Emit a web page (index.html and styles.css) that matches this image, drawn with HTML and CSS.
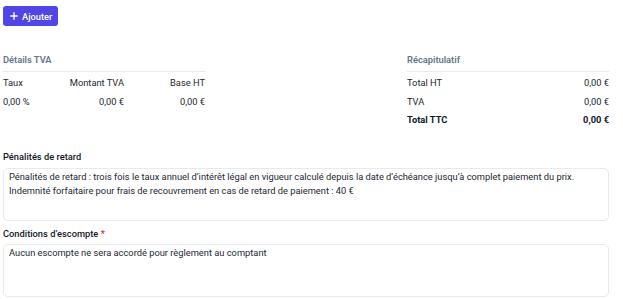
FILE: index.html
```html
<!DOCTYPE html>
<html lang="fr">
<head>
<meta charset="utf-8">
<link rel="stylesheet" href="styles.css">
</head>
<body>
<div class="page">
  <div class="toolbar">
    <button class="btn-add" type="button">
      <svg width="8" height="8" viewBox="0 0 10 10"><path d="M5 1v8M1 5h8" stroke="#fff" stroke-width="1.7" stroke-linecap="round"/></svg>
      <span>Ajouter</span>
    </button>
  </div>

  <div class="summary">
    <section class="block">
      <h3 class="block-title">Détails TVA</h3>
      <div class="vat-table">
        <div class="vat-row">
          <span>Taux</span><span class="r">Montant TVA</span><span class="r">Base HT</span>
        </div>
        <div class="vat-row">
          <span>0,00 %</span><span class="r">0,00 €</span><span class="r">0,00 €</span>
        </div>
      </div>
    </section>
    <section class="block block-right">
      <h3 class="block-title">Récapitulatif</h3>
      <div class="recap">
        <div class="recap-row"><span>Total HT</span><span>0,00 €</span></div>
        <div class="recap-row"><span>TVA</span><span>0,00 €</span></div>
        <div class="recap-row total"><span>Total TTC</span><span>0,00 €</span></div>
      </div>
    </section>
  </div>

  <div class="field">
    <label class="field-label">Pénalités de retard</label>
    <div class="textarea">Pénalités de retard : trois fois le taux annuel d’intérêt légal en vigueur calculé depuis la date d’échéance jusqu’à complet paiement du prix.<br>Indemnité forfaitaire pour frais de recouvrement en cas de retard de paiement : 40 €</div>
  </div>

  <div class="field field-second">
    <label class="field-label">Conditions d’escompte <span class="req">*</span></label>
    <div class="textarea">Aucun escompte ne sera accordé pour règlement au comptant</div>
  </div>
</div>
</body>
</html>
```

FILE: styles.css
```css
* { box-sizing: border-box; }
html, body { margin: 0; background: #fff; }
body {
  font-family: Roboto, "Noto Sans", sans-serif;
  font-size: 9.3px;
  color: #222831;
}
.page {
  padding: 6px 14px 0 3px;
}
.toolbar { display: flex; }
.btn-add {
  display: inline-flex;
  align-items: center;
  gap: 4px;
  height: 20px;
  padding: 0 6px 0 7px;
  border: 0;
  border-radius: 3px;
  background: #4f46e5;
  color: #fff;
  font-family: inherit;
  font-size: 9.3px;
  font-weight: 500;
}
.summary {
  display: grid;
  grid-template-columns: repeat(3, 1fr);
  margin-top: 26px;
}
.block-right { grid-column: 3; }
.block-title {
  margin: 0;
  padding-bottom: 3px;
  border-bottom: 1px solid #e5e9f0;
  font-size: 9.3px;
  font-weight: 600;
  color: #64748b;
  line-height: 16px;
}
.vat-table, .recap { padding-top: 2px; }
.vat-row {
  display: grid;
  grid-template-columns: 40px 1fr 1fr;
  line-height: 18px;
  height: 18.5px;
}
.r { text-align: right; }
.recap-row {
  display: flex;
  justify-content: space-between;
  line-height: 18px;
  height: 18.5px;
}
.recap-row.total { font-weight: 700; color: #111827; }
.field { margin-top: 20px; }
.field-second { margin-top: 6px; }
.field-label {
  display: block;
  font-weight: 500;
  color: #111827;
  line-height: 14px;
  margin-bottom: 4px;
}
.field-second .field-label { margin-bottom: 3px; }
.req { color: #dc2626; }
.textarea {
  border: 1px solid #e5e9f0;
  border-radius: 5px;
  height: 53px;
  padding: 1px 5px;
  line-height: 14px;
  color: #222831;
}
```
